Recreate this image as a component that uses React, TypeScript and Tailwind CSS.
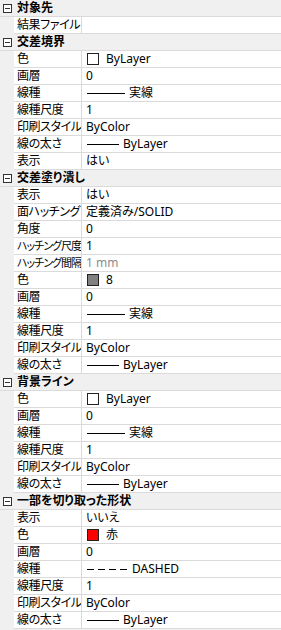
type Value =
  | { kind: "text"; text: string; muted?: boolean }
  | { kind: "swatch"; color: string; text: string }
  | { kind: "line"; text: string; width: number }
  | { kind: "dashed"; text: string };

type Row = { name: string; value: Value };
type Section = { title: string; rows: Row[] };

const t = (text: string): Value => ({ kind: "text", text });

const sections: Section[] = [
  { title: "対象先", rows: [{ name: "結果ファイル", value: t("") }] },
  {
    title: "交差境界",
    rows: [
      { name: "色", value: { kind: "swatch", color: "#ffffff", text: "ByLayer" } },
      { name: "画層", value: t("0") },
      { name: "線種", value: { kind: "line", text: "実線", width: 38 } },
      { name: "線種尺度", value: t("1") },
      { name: "印刷スタイル", value: t("ByColor") },
      { name: "線の太さ", value: { kind: "line", text: "ByLayer", width: 32 } },
      { name: "表示", value: t("はい") },
    ],
  },
  {
    title: "交差塗り潰し",
    rows: [
      { name: "表示", value: t("はい") },
      { name: "面ハッチング", value: t("定義済み/SOLID") },
      { name: "角度", value: t("0") },
      { name: "ハッチング尺度", value: t("1") },
      { name: "ハッチング間隔", value: { kind: "text", text: "1 mm", muted: true } },
      { name: "色", value: { kind: "swatch", color: "#808080", text: "8" } },
      { name: "画層", value: t("0") },
      { name: "線種", value: { kind: "line", text: "実線", width: 38 } },
      { name: "線種尺度", value: t("1") },
      { name: "印刷スタイル", value: t("ByColor") },
      { name: "線の太さ", value: { kind: "line", text: "ByLayer", width: 32 } },
    ],
  },
  {
    title: "背景ライン",
    rows: [
      { name: "色", value: { kind: "swatch", color: "#ffffff", text: "ByLayer" } },
      { name: "画層", value: t("0") },
      { name: "線種", value: { kind: "line", text: "実線", width: 38 } },
      { name: "線種尺度", value: t("1") },
      { name: "印刷スタイル", value: t("ByColor") },
      { name: "線の太さ", value: { kind: "line", text: "ByLayer", width: 32 } },
    ],
  },
  {
    title: "一部を切り取った形状",
    rows: [
      { name: "表示", value: t("いいえ") },
      { name: "色", value: { kind: "swatch", color: "#ff0000", text: "赤" } },
      { name: "画層", value: t("0") },
      { name: "線種", value: { kind: "dashed", text: "DASHED" } },
      { name: "線種尺度", value: t("1") },
      { name: "印刷スタイル", value: t("ByColor") },
      { name: "線の太さ", value: { kind: "line", text: "ByLayer", width: 32 } },
    ],
  },
];

const CollapseIcon = () => (
  <svg width="9" height="9" viewBox="0 0 9 9" className="shrink-0">
    <rect x="0.5" y="0.5" width="8" height="8" fill="#fff" stroke="#333" />
    <line x1="2" y1="4.5" x2="7" y2="4.5" stroke="#333" />
  </svg>
);

const ValueCell = ({ value }: { value: Value }) => {
  if (value.kind === "swatch") {
    return (
      <div className="flex items-center gap-[7px] pl-px">
        <span
          className="w-[12px] h-[12px] border border-[#222]"
          style={{ backgroundColor: value.color }}
        />
        <span className="[font-feature-settings:'palt']">{value.text}</span>
      </div>
    );
  }
  if (value.kind === "line") {
    return (
      <div className="flex items-center gap-[4px] pl-px">
        <span className="h-px bg-black" style={{ width: value.width }} />
        <span>{value.text}</span>
      </div>
    );
  }
  if (value.kind === "dashed") {
    return (
      <div className="flex items-center gap-[5px] pl-px">
        <span className="flex gap-[4px]">
          <span className="w-[7px] h-px bg-black" />
          <span className="w-[7px] h-px bg-black" />
          <span className="w-[7px] h-px bg-black" />
          <span className="w-[7px] h-px bg-black" />
        </span>
        <span>{value.text}</span>
      </div>
    );
  }
  return (
    <span className={value.muted ? "text-[#8c8c8c]" : "[font-feature-settings:'palt']"}>
      {value.text}
    </span>
  );
};

export default function App() {
  return (
    <div
      className="w-[281px] h-[630px] bg-[#f0f0f0] text-[12px] leading-[16px] text-black overflow-hidden"
      style={{ fontFamily: '"Noto Sans", "Noto Sans CJK JP", sans-serif' }}
    >
      {sections.map((section) => (
        <div key={section.title}>
          <div className="h-[17px] flex items-center bg-[#f0f0f0] border-b border-[#dadada]">
            <div className="w-[14px] flex justify-center pl-[1px]">
              <CollapseIcon />
            </div>
            <span className="pl-[3px] font-bold [font-feature-settings:'palt']">
              {section.title}
            </span>
          </div>
          {section.rows.map((row, i) => (
            <div key={i} className="h-[17px] flex">
              <div className="w-[14px] shrink-0 bg-[#f0f0f0]" />
              <div className="flex flex-1 bg-white border-b border-[#dadada]">
                <div
                  className={
                    row.name.length >= 7
                      ? "w-[68px] shrink-0 pl-[3px] flex items-center border-r border-[#dadada] whitespace-nowrap overflow-hidden text-[11px] tracking-[-1px] [font-feature-settings:'palt']"
                      : "w-[68px] shrink-0 pl-[3px] flex items-center border-r border-[#dadada] whitespace-nowrap overflow-hidden tracking-[-0.4px] [font-feature-settings:'palt']"
                  }
                >
                  {row.name}
                </div>
                <div className="flex-1 pl-[4px] flex items-center whitespace-nowrap">
                  <ValueCell value={row.value} />
                </div>
              </div>
            </div>
          ))}
        </div>
      ))}
    </div>
  );
}
